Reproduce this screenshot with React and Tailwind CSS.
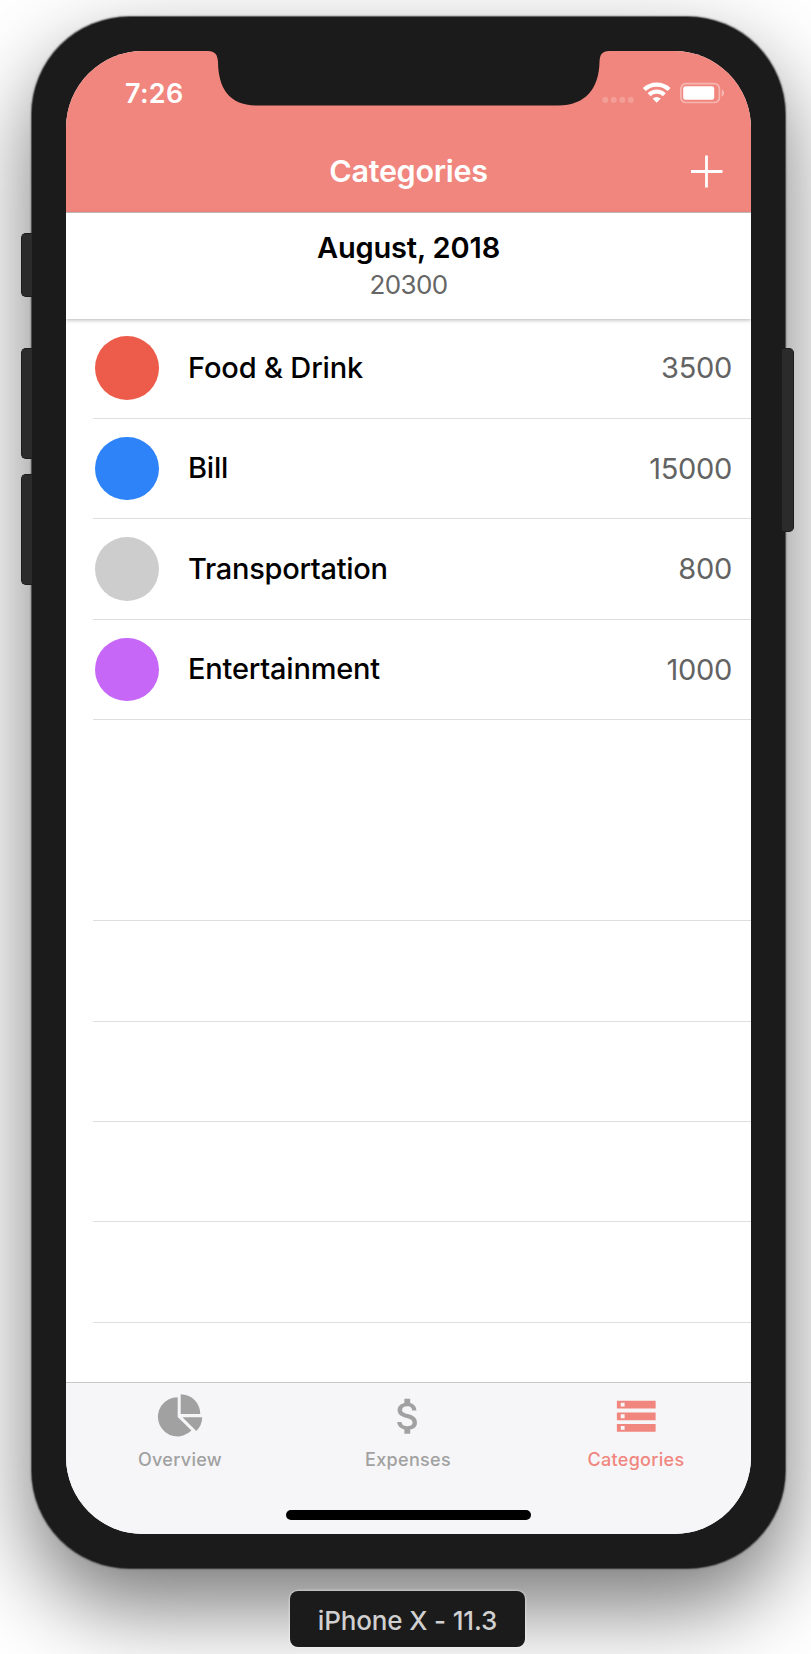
import React from "react";
import { MdAttachMoney, MdStorage } from "react-icons/md";

const categories = [
  { name: "Food & Drink", amount: "3500", dot: "bg-[#ed5c4b]", tracking: "tracking-[-0.15px]" },
  { name: "Bill", amount: "15000", dot: "bg-[#2d83f7]", tracking: "tracking-[-0.2px]" },
  { name: "Transportation", amount: "800", dot: "bg-[#cdcdcd]", tracking: "tracking-[-0.28px]" },
  { name: "Entertainment", amount: "1000", dot: "bg-[#c667f8]", tracking: "tracking-[-0.2px]" },
];

function SideButtons() {
  return (
    <>
      <div className="absolute -left-[11px] top-[216px] h-[64px] w-[11px] rounded-l-[5px] border border-r-0 border-[#1c1c1c] bg-[#2b2b2b]" />
      <div className="absolute -left-[11px] top-[331px] h-[111px] w-[11px] rounded-l-[5px] border border-r-0 border-[#1c1c1c] bg-[#2b2b2b]" />
      <div className="absolute -left-[11px] top-[457px] h-[111px] w-[11px] rounded-l-[5px] border border-r-0 border-[#1c1c1c] bg-[#2b2b2b]" />
      <div className="absolute -right-[9px] top-[331px] h-[184px] w-[12px] rounded-r-[5px] border border-l-0 border-[#1c1c1c] bg-[#2b2b2b]" />
    </>
  );
}

function Notch() {
  return (
    <svg className="absolute left-[142px] top-0" width="401" height="55" viewBox="0 0 401 55" fill="#1b1b1b">
      <path d="M0 0 C7 .3 9.6 3.5 10 11 C10.3 37 21 54.5 49 54.5 H350 C378 54.5 391 37 391.500 11 C391.800 3.500 394 .3 401 0 Z" />
    </svg>
  );
}

function StatusIcons() {
  return (
    <svg className="shrink-0" width="124" height="24" viewBox="0 0 124 24">
      <g fill="#fff" fillOpacity=".2">
        <rect x=".4" y="16" width="5.700" height="5.700" rx="1.800" />
        <rect x="8.900" y="16" width="5.700" height="5.700" rx="1.800" />
        <rect x="17.500" y="16" width="5.700" height="5.700" rx="1.800" />
        <rect x="26" y="16" width="5.700" height="5.700" rx="1.800" />
      </g>
      <g fill="none" stroke="#fff">
        <path d="M42.300 8.500 A18 18 0 0 1 67.100 8.500" strokeWidth="4.300" />
        <path d="M47.100 13.700 A11 11 0 0 1 62.300 13.700" strokeWidth="4.200" />
      </g>
      <path d="M54.700 21.800 L50.600 17.500 A6.800 6.800 0 0 1 58.800 17.500 Z" fill="#fff" />
      <rect x="78.900" y="2.700" width="38.500" height="18.800" rx="5" fill="none" stroke="#fff" strokeOpacity=".4" strokeWidth="1.700" />
      <rect x="81.200" y="5.300" width="31" height="13.500" rx="2.200" fill="#fff" />
      <path d="M119.800 8.400 Q122 9.200 122 12.100 T119.800 15.800 Z" fill="#fff" fillOpacity=".45" />
    </svg>
  );
}

function PieIcon() {
  return (
    <svg className="mb-[2px]" width="46" height="46" viewBox="0 0 46 46" fill="#a1a1a1">
      <path d="M20.700 5.200 V24.900 L34.400 38.600 A19.600 19.600 0 1 1 20.700 5.200 Z" />
      <path d="M23.700 2.200 A19.800 19.800 0 0 1 43.300 21.900 H23.700 Z" />
      <path d="M25.500 25.200 H45.200 A19.600 19.600 0 0 1 39.300 39 Z" />
    </svg>
  );
}

function Tab({ label, color, icon }) {
  return (
    <div className={`flex flex-1 flex-col items-center ${color}`}>
      <div className="flex h-[65px] items-center justify-center">{icon}</div>
      <span className="text-[18px] font-medium leading-[24px] tracking-[0.3px]">{label}</span>
    </div>
  );
}

export default function App() {
  return (
    <div className="flex h-[1654px] w-[811px] flex-col overflow-hidden bg-white pl-[32px] pt-[17px] font-['Inter','Liberation_Sans',sans-serif]">
      <div className="relative h-[1551px] w-[753px] shrink-0 rounded-[98px] bg-[#1b1b1b] pl-[34px] pt-[34px] shadow-[0_38px_88px_rgba(0,0,0,0.54),0_0_1.5px_0.3px_rgba(60,60,60,0.9)]">
        <SideButtons />

        <div className="relative flex h-[1483px] w-[685px] flex-col overflow-hidden rounded-[77px] bg-white">
          <header className="flex h-[162px] shrink-0 flex-col border-b border-[#cfc4c3] bg-[#f1867e] text-white">
            <div className="flex h-[84px] items-start justify-between pl-[59px] pr-[25px]">
              <span className="mt-[26px] text-[27px] font-semibold leading-[34px] tracking-[0.3px]">7:26</span>
              <div className="mt-[30px]">
                <StatusIcons />
              </div>
            </div>
            <div className="grid h-[74px] grid-cols-[1fr_auto_1fr] items-center">
              <span />
              <h1 className="mb-[2px] text-[30.500px] font-semibold leading-[36px] tracking-[-0.3px]">Categories</h1>
              <svg className="mb-[2px] mr-[28px] justify-self-end" width="33" height="33" viewBox="0 0 33 33" stroke="#fff" strokeWidth="2.800">
                <path d="M16.500 .5 V32.500 M1 16.500 H32.500" />
              </svg>
            </div>
          </header>

          <section className="relative z-10 flex h-[105.500px] shrink-0 flex-col items-center bg-white pt-[16px] shadow-[0_1px_4px_rgba(0,0,0,0.3)]">
            <h2 className="text-[29px] font-semibold leading-[38px] tracking-[-0.15px] text-black">August, 2018</h2>
            <p className="text-[26px] leading-[35px] tracking-[-0.6px] text-[#666]">20300</p>
          </section>

          <main className="flex min-h-0 flex-1 flex-col overflow-hidden">
            {categories.map((c) => (
              <div key={c.name} className="ml-[27px] flex h-[100.450px] shrink-0 items-center border-b border-[#dedede] pl-[2px] pr-[19px]">
                <div className={`size-[63.500px] rounded-full ${c.dot}`} />
                <span className={`mb-px ml-[29.500px] flex-1 text-[29px] font-medium leading-[36px] text-black ${c.tracking}`}>{c.name}</span>
                <span className="text-[29px] leading-[36px] tracking-[-0.3px] text-[#636363]">{c.amount}</span>
              </div>
            ))}
            <div className="ml-[27px] h-[200.900px] shrink-0 border-b border-[#dedede]" />
            {[1, 2, 3, 4].map((n) => (
              <div key={n} className="ml-[27px] h-[100.450px] shrink-0 border-b border-[#dedede]" />
            ))}
          </main>

          <nav className="flex h-[152px] shrink-0 flex-col items-center border-t border-[#c9c9cb] bg-[#f6f6f8]">
            <div className="flex w-full flex-1 pr-[1px]">
              <Tab label="Overview" color="text-[#a1a1a1]" icon={<PieIcon />} />
              <Tab label="Expenses" color="text-[#a1a1a1]" icon={<MdAttachMoney className="mt-[2px]" size={46.5} />} />
              <Tab label="Categories" color="text-[#f1867e]" icon={<MdStorage className="mt-[2px]" size={46.5} />} />
            </div>
            <div className="mb-[14.500px] h-[9.500px] w-[245px] rounded-full bg-black" />
          </nav>

          <Notch />
        </div>
      </div>

      <div className="mt-[23px] flex h-[56px] w-[751px] shrink-0 justify-center">
        <div className="z-10 flex w-[235px] items-center justify-center rounded-[8px] bg-[#1b1b1b] pt-[3px] text-[26px] font-medium tracking-[-0.15px] text-[#d0d0d0] shadow-[0_0_0_1.5px_rgba(255,255,255,0.25)]">
          iPhone X - 11.3
        </div>
      </div>
    </div>
  );
}
